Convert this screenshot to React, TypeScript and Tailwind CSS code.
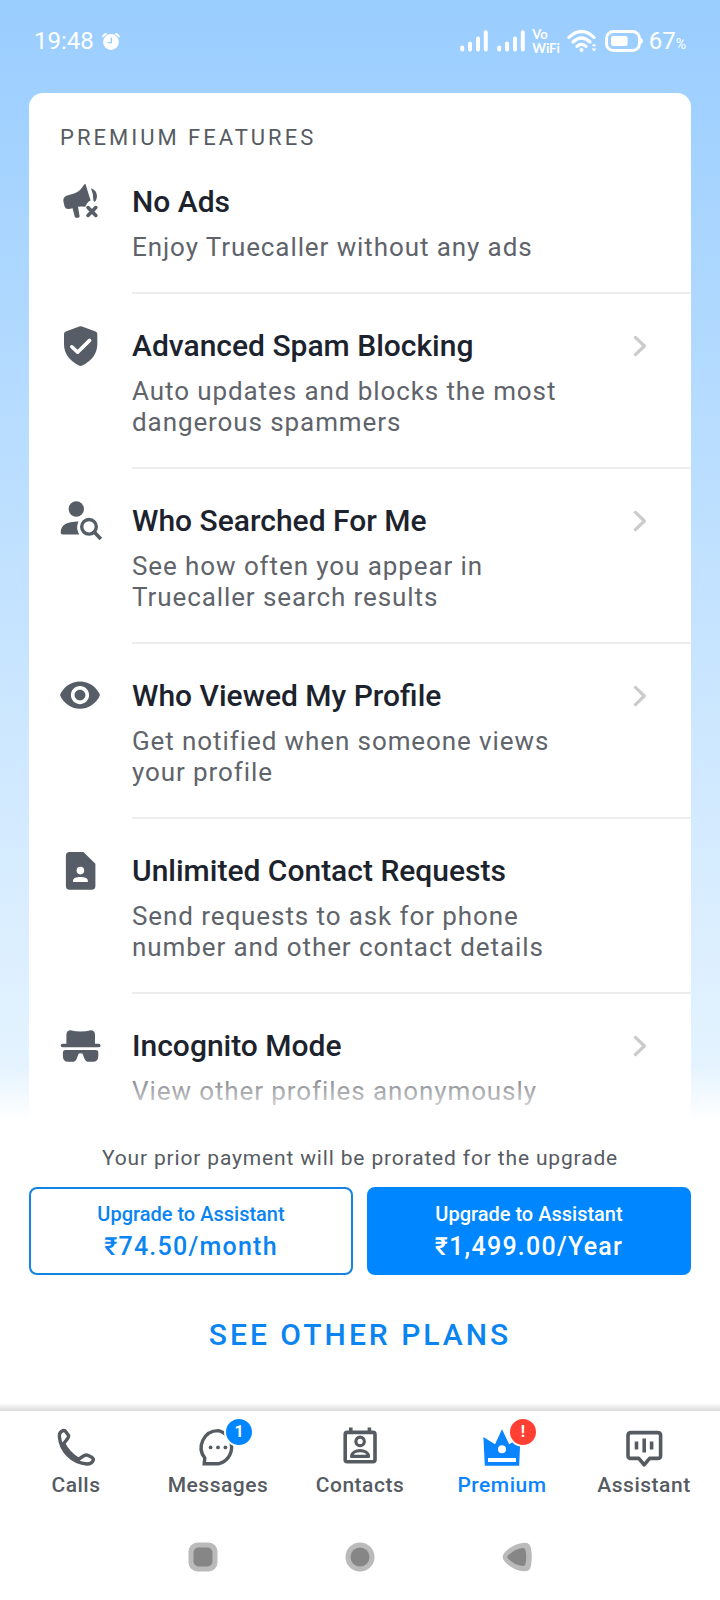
import { ReactNode } from 'react';

const FEATURE_ICON = 'w-10 h-10 text-[#565d66]';

const NoAdsIcon = () => (
  <svg viewBox="0 0 40 40" className={FEATURE_ICON} fill="currentColor" aria-hidden="true">
    <path d="M25.4 1.8 30.6 18.6Q28 19.6 27 21.6L25.2 24.8Q22 24 18 24.8L19.6 34.3Q19.6 35.6 18.4 35.8L16.2 35.8Q15 35.8 14.7 34.6L12.6 26.2 8.8 26.9Q5.4 27.2 4.6 24.4L3.4 19.4Q2.8 15.4 6.4 13.7L14 11.5Q20 9.4 22.8 4.6 24.4 1.8 25.4 1.8Z" />
    <path d="M31 6.2Q36.8 8.6 37 13.8 37 17.6 35 20L33.4 18.8Q33.6 12 31 6.2Z" />
    <path d="M28 25.6 35.8 33.4M35.8 25.6 28 33.4" stroke="currentColor" strokeWidth="3.6" strokeLinecap="round" />
  </svg>
);

const ShieldIcon = () => (
  <svg viewBox="0 0 40 40" className={FEATURE_ICON} fill="none" aria-hidden="true">
    <path d="M19.3.4Q20.6-.1 22 .4L35.6 5.5Q37.3 6.2 37.3 8V18.5Q37 32 22.2 39.6 20.6 40.3 19 39.6 4.3 32 4 18.5V8Q4 6.2 5.7 5.5Z" fill="currentColor" />
    <path d="M11.8 20.8 17.6 26.2 29.6 14.4" stroke="#fff" strokeWidth="3.6" strokeLinecap="round" strokeLinejoin="round" />
  </svg>
);

const PersonSearchIcon = () => (
  <svg viewBox="0 0 40 40" className={FEATURE_ICON + ' overflow-visible'} fill="none" aria-hidden="true">
    <circle cx="16.3" cy="8" r="7.7" fill="currentColor" />
    <path d="M.7 31.6C.7 23.6 8 20.4 18.6 20.6 16.6 24.6 16.6 29.4 19.4 33.6H2.7Q.7 33.6.7 31.6Z" fill="currentColor" />
    <circle cx="29" cy="25.8" r="7.3" stroke="currentColor" strokeWidth="3.4" />
    <path d="M34.2 31 39.6 36.6" stroke="currentColor" strokeWidth="3.6" strokeLinecap="square" />
  </svg>
);

const EyeIcon = () => (
  <svg viewBox="1 1 22 22" className={FEATURE_ICON} fill="currentColor" aria-hidden="true">
    <path d="M12 4C7 4 2.73 7.11 1 11.5 2.73 15.89 7 19 12 19s9.27-3.11 11-7.5C21.27 7.11 17 4 12 4zm0 12.5c-2.76 0-5-2.24-5-5s2.24-5 5-5 5 2.24 5 5-2.24 5-5 5zm0-8c-1.66 0-3 1.34-3 3s1.34 3 3 3 3-1.34 3-3-1.34-3-3-3z" />
  </svg>
);

const ContactPageIcon = () => (
  <svg viewBox="0 0 40 40" className={FEATURE_ICON} aria-hidden="true">
    <path d="M9.6 1H23.4L35.4 12.8V35Q35.4 38.7 31.7 38.7H9.6Q5.9 38.7 5.9 35V4.7Q5.9 1 9.6 1Z" fill="currentColor" />
    <circle cx="20.4" cy="19.6" r="3.8" fill="#fff" />
    <path d="M13 31V29.4C13 24.8 27.8 24.8 27.8 29.4V31Z" fill="#fff" />
  </svg>
);

const IncognitoIcon = () => (
  <svg viewBox="0 0 40 40" className={FEATURE_ICON + ' overflow-visible'} fill="currentColor" aria-hidden="true">
    <path d="M6.4 17.8V8.4Q6.8 4.2 10.6 4.2 15 5.4 20.6 5.4 26.2 5.4 30.8 4.2 34.6 4.2 35 8.4V17.8H38.8Q40.6 17.8 40.6 19.6T38.8 21.3H2.4Q.7 21.3.7 19.6T2.4 17.8Z" />
    <path d="M5.5 24H35.7Q38.3 24 38.3 26.6V30Q38.2 35.8 33 35.8H29Q25.6 35.8 24.4 32.4L23 28.6Q22.4 27.2 20.6 27.2T18.2 28.6L16.8 32.4Q15.6 35.8 12.2 35.8H8.2Q3 35.8 2.9 30V26.6Q2.9 24 5.5 24Z" />
  </svg>
);

const Chevron = () => (
  <svg viewBox="0 0 14 22" className="w-3.5 h-[22px] text-[#cbcbcb]" fill="none" aria-hidden="true">
    <path d="M2.4 2.4 11.4 11 2.4 19.6" stroke="currentColor" strokeWidth="3.2" strokeLinecap="round" strokeLinejoin="round" />
  </svg>
);

interface FeatureProps {
  icon: ReactNode;
  title: string;
  description: string;
  link?: boolean;
}

const features: FeatureProps[] = [
  { icon: <NoAdsIcon />, title: 'No Ads', description: 'Enjoy Truecaller without any ads' },
  {
    icon: <ShieldIcon />,
    title: 'Advanced Spam Blocking',
    description: 'Auto updates and blocks the most dangerous spammers',
    link: true,
  },
  {
    icon: <PersonSearchIcon />,
    title: 'Who Searched For Me',
    description: 'See how often you appear in Truecaller search results',
    link: true,
  },
  {
    icon: <EyeIcon />,
    title: 'Who Viewed My Profile',
    description: 'Get notified when someone views your profile',
    link: true,
  },
  {
    icon: <ContactPageIcon />,
    title: 'Unlimited Contact Requests',
    description: 'Send requests to ask for phone number and other contact details',
  },
  { icon: <IncognitoIcon />, title: 'Incognito Mode', description: 'View other profiles anonymously', link: true },
];

const Feature = ({ icon, title, description, link }: FeatureProps) => (
  <li className="group flex gap-8 pl-[31px]">
    <div className="shrink-0 pt-8 group-first:pt-4">{icon}</div>
    <div className="flex-1 min-w-0 pt-[34px] pb-[29px] pr-11 border-b-2 border-[#ededee] group-first:pt-[18px] group-last:border-b-0">
      <div className="flex items-center justify-between">
        <h2 className="text-3xl leading-9 font-medium text-[#1c232d]">{title}</h2>
        {link && <Chevron />}
      </div>
      <p className="mt-3 max-w-[440px] text-[26px] leading-[31px] tracking-[0.035em] text-[#5f646b]">{description}</p>
    </div>
  </li>
);

const SignalIcon = () => (
  <svg viewBox="0 0 28 22" className="w-7 h-[22px]" stroke="currentColor" strokeWidth="4" strokeLinecap="round" aria-hidden="true">
    <path d="M2.2 17.6V19.6M10 13.6V19.6M18 8.6V19.6M25.8 2.2V19.6" />
  </svg>
);

const StatusBar = () => (
  <header className="shrink-0 flex items-center justify-between pt-[25px] pb-9 px-[34px] text-white">
    <div className="flex items-center gap-2">
      <span className="text-2xl leading-8">19:48</span>
      <svg viewBox="0 0 18 17" className="w-[18px] h-[17px]" fill="none" aria-label="Alarm set">
        <circle cx="9" cy="9" r="7.9" fill="currentColor" />
        <path d="M1 3.4Q2 1.4 4 1M17 3.4Q16 1.4 14 1" stroke="currentColor" strokeWidth="1.8" strokeLinecap="round" />
        <path d="M9.3 4.6V9.6H5.6" stroke="#9bceff" strokeWidth="1.4" />
      </svg>
    </div>
    <div className="flex items-center">
      <SignalIcon />
      <div className="ml-[9px]">
        <SignalIcon />
      </div>
      <div className="ml-[7px] flex flex-col font-[Lato,sans-serif] text-[13px] leading-[14px] font-bold">
        <span>Vo</span>
        <span>WiFi</span>
      </div>
      <svg viewBox="0 0 30 24" className="ml-[7px] w-[30px] h-6" fill="none" stroke="currentColor" strokeWidth="3.2" strokeLinecap="round" aria-label="WiFi">
        <path d="M2 8.4Q14.4-3.4 27 8.4M6 13Q14.4 5 23 13M10 17.4Q14.4 13.4 19 17.4" />
        <circle cx="14.5" cy="21" r="2" fill="currentColor" stroke="none" />
        <path d="M24.6 17.2 27 14.4 29.4 17.2ZM24.6 19.4 27 22.6 29.4 19.4Z" fill="currentColor" stroke="none" />
      </svg>
      <svg viewBox="0 0 38 22" className="ml-2 w-[38px] h-[22px]" fill="none" aria-label="Battery">
        <rect x="1.5" y="1.5" width="33" height="19" rx="7" stroke="currentColor" strokeWidth="3" />
        <rect x="6" y="6" width="16.6" height="10" rx="2" fill="currentColor" />
        <path d="M36 8Q38 9 38 11T36 14Z" fill="currentColor" />
      </svg>
      <span className="ml-1.5 text-2xl leading-8">
        67<span className="text-sm">%</span>
      </span>
    </div>
  </header>
);

interface PlanButtonProps {
  price: string;
  primary?: boolean;
}

const PlanButton = ({ price, primary }: PlanButtonProps) => (
  <button
    type="button"
    className={
      'flex-1 flex flex-col items-center justify-center h-[88px] pt-1 rounded-lg border-2 font-medium ' +
      (primary ? 'bg-[#0087ff] border-[#0087ff] text-white' : 'bg-white border-[#1583e0] text-[#0a84f0]')
    }
  >
    <span className="text-xl leading-7">Upgrade to Assistant</span>
    <span className="text-[25px] leading-[38px] tracking-wider">{price}</span>
  </button>
);

const TAB_ICON = 'w-[38px] h-[38px] overflow-visible';

const PhoneIcon = () => (
  <svg viewBox="0 0 38 38" className={TAB_ICON} fill="none" stroke="currentColor" strokeWidth="3.4" strokeLinejoin="round" aria-hidden="true">
    <path d="M6 2.6C3.6 3.4 2 5.6 2.4 9 4 23.4 15.4 35 30 36 33 36 35.4 34.4 36.2 32.4 36.8 31 36 30.2 34.8 29.2L30.8 27.2C28.6 26.2 26.4 27.6 21.6 31.4 14.6 27 9.6 21.6 6.6 15.4 10.4 11 12.2 9.6 11.6 7.4L8.6 3.4Q7.4 2.2 6 2.6Z" />
  </svg>
);

const MessageIcon = () => (
  <svg viewBox="0 0 38 38" className={TAB_ICON} fill="none" aria-hidden="true">
    <path d="M19.3 2.6A17 17 0 0 1 19.3 35.8H5.2L5.8 30C-2.6 19.6 4.4 2.6 19.3 2.6Z" stroke="currentColor" strokeWidth="3.4" />
    <g fill="currentColor">
      <circle cx="11.6" cy="19.4" r="1.9" />
      <circle cx="19" cy="19.4" r="1.9" />
      <circle cx="26.4" cy="19.4" r="1.9" />
    </g>
  </svg>
);

const ContactsIcon = () => (
  <svg viewBox="0 0 38 38" className={TAB_ICON} fill="none" stroke="currentColor" strokeWidth="3.6" aria-hidden="true">
    <rect x="4.2" y="4.4" width="29.8" height="29.4" rx="2" />
    <path d="M9.8-.6V4.4M28.4-.6V4.4" />
    <circle cx="19.1" cy="13.4" r="4.2" strokeWidth="3.2" />
    <path d="M10.6 28.4C11 20.6 27.2 20.6 27.6 28.4Z" strokeWidth="3.2" strokeLinejoin="round" />
  </svg>
);

const CrownIcon = () => (
  <svg viewBox="0 0 38 38" className={TAB_ICON} aria-hidden="true">
    <path d="M.4 9 12 16.3 19 1.3 26.2 16.3 37.4 9 36.2 37.7H1.8Z" fill="currentColor" />
    <circle cx="19" cy="21.3" r="4" fill="#fff" />
    <rect x="5" y="30" width="28" height="4" fill="#fff" />
  </svg>
);

const AssistantIcon = () => (
  <svg viewBox="0 0 38 38" className={TAB_ICON} fill="none" stroke="currentColor" strokeWidth="3.6" aria-hidden="true">
    <path d="M6 4.6H32.6Q35.6 4.6 35.6 7.6V27.4Q35.6 30.4 32.6 30.4H24.6L19.2 36.8 13.8 30.4H6Q3 30.4 3 27.4V7.6Q3 4.6 6 4.6Z" strokeLinejoin="round" />
    <path d="M11.5 13.4V21.4M19.2 10.6V24.4M26.6 13.4V21.4" />
  </svg>
);

interface TabProps {
  icon: ReactNode;
  label: string;
  badge?: string;
  alert?: boolean;
  active?: boolean;
}

const tabs: TabProps[] = [
  { icon: <PhoneIcon />, label: 'Calls' },
  { icon: <MessageIcon />, label: 'Messages', badge: '1' },
  { icon: <ContactsIcon />, label: 'Contacts' },
  { icon: <CrownIcon />, label: 'Premium', badge: '!', alert: true, active: true },
  { icon: <AssistantIcon />, label: 'Assistant' },
];

const Tab = ({ icon, label, badge, alert, active }: TabProps) => (
  <a
    href="#"
    aria-current={active ? 'page' : undefined}
    className={'flex-1 flex flex-col items-center gap-1 ' + (active ? 'text-[#0a84ff]' : 'text-[#565b62]')}
  >
    <span className="relative">
      {icon}
      {badge && (
        <span
          className={
            'absolute -top-[11px] left-[25px] w-[30px] h-[30px] flex items-center justify-center rounded-full border-2 border-white text-white text-base leading-none font-bold ' +
            (alert ? 'bg-[#ff4033]' : 'bg-[#0087ff]')
          }
        >
          {badge}
        </span>
      )}
    </span>
    <span className="text-[21px] leading-[30px] font-medium tracking-wide">{label}</span>
  </a>
);

const SystemNav = () => (
  <div className="flex justify-center gap-[127px] pt-[42px] pb-7">
    <button type="button" aria-label="Recent apps">
      <svg viewBox="0 0 30 30" className="w-[30px] h-[30px]">
        <rect x=".5" y=".5" width="29" height="29" rx="9" fill="#bababa" />
        <rect x="5.5" y="5.5" width="19" height="19" rx="5" fill="#868686" />
      </svg>
    </button>
    <button type="button" aria-label="Home">
      <svg viewBox="0 0 30 30" className="w-[30px] h-[30px]">
        <circle cx="15" cy="15" r="14.5" fill="#bababa" />
        <circle cx="15" cy="15" r="9.5" fill="#868686" />
      </svg>
    </button>
    <button type="button" aria-label="Back">
      <svg viewBox="0 0 30 30" className="w-[30px] h-[30px]" strokeLinejoin="round">
        <path d="M7 15Q14 7.6 22.6 7 24.4 15 22.6 23 14 22.4 7 15Z" fill="#bababa" stroke="#bababa" strokeWidth="12.6" />
        <path d="M8 15Q14 9 21 8.4 22.4 15 21 21.6 14 21 8 15Z" fill="#868686" stroke="#868686" strokeWidth="5" />
      </svg>
    </button>
  </div>
);

const App = () => (
  <div className="h-screen flex flex-col bg-white font-[Roboto,sans-serif]">
    <div className="relative flex-1 min-h-0 overflow-hidden flex flex-col bg-linear-to-b from-[#99cdff] to-[#e8f5ff]">
      <StatusBar />
      <main className="flex-1 min-h-0 overflow-hidden mx-[29px] rounded-t-[14px] bg-white">
        <h1 className="pt-[30px] pl-[31px] text-[22px] leading-[30px] tracking-[3px] text-[#565b62]">PREMIUM FEATURES</h1>
        <ul className="pt-[13px]">
          {features.map((feature) => (
            <Feature key={feature.title} {...feature} />
          ))}
        </ul>
      </main>
      <div className="absolute inset-x-0 bottom-0 h-14 bg-linear-to-b from-white/0 to-white pointer-events-none" />
    </div>

    <section className="shrink-0 px-[29px] pt-[22px]">
      <p className="text-center text-[21px] leading-7 tracking-[0.04em] text-[#565b62]">
        Your prior payment will be prorated for the upgrade
      </p>
      <div className="flex gap-3.5 mt-[15px]">
        <PlanButton price="₹74.50/month" />
        <PlanButton price="₹1,499.00/Year" primary />
      </div>
      <a href="#" className="block pt-10 pb-12 text-center text-3xl leading-10 font-medium tracking-widest text-[#0a84f0]">
        SEE OTHER PLANS
      </a>
    </section>

    <div className="shrink-0 h-2 bg-linear-to-b from-white to-[#dadada]" />
    <footer className="shrink-0">
      <nav className="flex px-[5px] pt-[17px]">
        {tabs.map((tab) => (
          <Tab key={tab.label} {...tab} />
        ))}
      </nav>
      <SystemNav />
    </footer>
  </div>
);

export default App;
